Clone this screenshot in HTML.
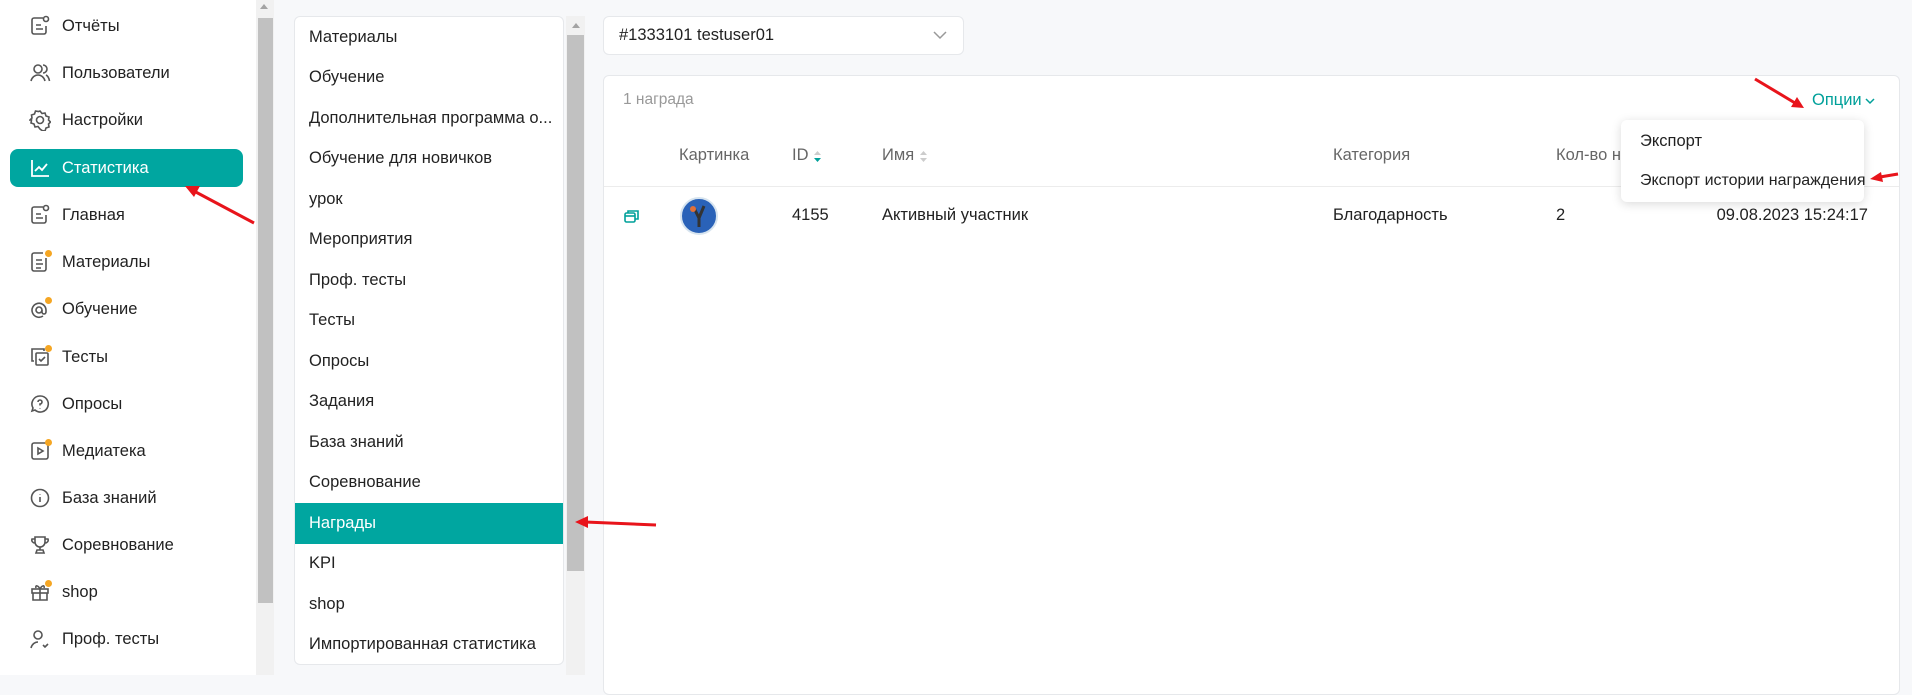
<!DOCTYPE html>
<html><head><meta charset="utf-8"><style>
*{box-sizing:border-box;margin:0;padding:0}
body{width:1912px;height:675px;overflow:hidden;background:#f7f8fa;font-family:"Liberation Sans",Arial,sans-serif;font-size:16.5px;color:#222;position:relative;white-space:nowrap}
.abs{position:absolute}
.side{left:0;top:0;width:256px;height:675px;background:#fff}
.si{position:absolute;left:10px;width:233px;height:38px;display:flex;align-items:center}
.si svg{position:absolute;left:19px;top:8px}
.si span{position:absolute;left:52px}
.si.act{background:#00a6a0;border-radius:8px;color:#fff}
.dot{position:absolute;width:7px;height:7px;border-radius:50%;background:#f5a623;left:35px;top:7px}
.panel{left:294px;top:16px;width:270px;height:649px;background:#fff;border:1px solid #e6e8eb;border-radius:6px;overflow:hidden}
.pi{position:absolute;left:0;width:270px;height:41px;line-height:41px;padding-left:14px;white-space:nowrap}
.pi.act{background:#00a6a0;color:#fff}
.hd{color:#666;position:absolute;top:146px}
.cell{position:absolute;top:206px}
</style></head><body>
<div class="abs side">
<div class="si" style="top:7px"><svg width="22" height="22" viewBox="0 0 22 22" fill="none" stroke="#555" stroke-width="1.6"><path d="M14 3H5a2 2 0 0 0-2 2v12a2 2 0 0 0 2 2h10a2 2 0 0 0 2-2v-6"/><path d="M7 10h5M7 14h7"/><circle cx="17" cy="4" r="2.5"/></svg><span>Отчёты</span></div>
<div class="si" style="top:54px"><svg width="22" height="22" viewBox="0 0 22 22" fill="none" stroke="#555" stroke-width="1.6"><circle cx="9" cy="7" r="4"/><path d="M2 19c1-4 4-6 7-6s6 2 7 6M14 3a4 4 0 0 1 0 8M17 13c2 1 3 3 3.5 6"/></svg><span>Пользователи</span></div>
<div class="si" style="top:101px"><svg width="22" height="22" viewBox="0 0 22 22" fill="none" stroke="#555" stroke-width="1.6"><path d="M11 2l2 2.5 3-.5 1 3 3 1-.5 3 2 2-2 2 .5 3-3 1-1 3-3-.5L11 20l-2-2.5-3 .5-1-3-3-1 .5-3L1 11l2-2-.5-3 3-1 1-3 3 .5z"/><circle cx="11" cy="11" r="3.5"/></svg><span>Настройки</span></div>
<div class="si act" style="top:149px"><svg width="22" height="22" viewBox="0 0 22 22" fill="none" stroke="#fff" stroke-width="1.8"><path d="M3 3v16h17M6 14l4-4 3 3 5-6"/></svg><span>Статистика</span></div>
<div class="si" style="top:196px"><svg width="22" height="22" viewBox="0 0 22 22" fill="none" stroke="#555" stroke-width="1.6"><path d="M14 3H5a2 2 0 0 0-2 2v12a2 2 0 0 0 2 2h10a2 2 0 0 0 2-2v-6"/><path d="M7 10h5M7 14h7"/><circle cx="17" cy="4" r="2.5"/></svg><span>Главная</span></div>
<div class="si" style="top:243px"><svg width="22" height="22" viewBox="0 0 22 22" fill="none" stroke="#555" stroke-width="1.6"><path d="M14 2H5a2 2 0 0 0-2 2v14a2 2 0 0 0 2 2h10a2 2 0 0 0 2-2V7"/><path d="M7 9h6M7 13h7M7 17h5"/></svg><i class="dot"></i><span>Материалы</span></div>
<div class="si" style="top:290px"><svg width="22" height="22" viewBox="0 0 22 22" fill="none" stroke="#555" stroke-width="1.6"><circle cx="10" cy="12" r="3"/><path d="M13 12v2a2 2 0 0 0 4 0v-2a7 7 0 1 0-3 6"/></svg><i class="dot"></i><span>Обучение</span></div>
<div class="si" style="top:338px"><svg width="22" height="22" viewBox="0 0 22 22" fill="none" stroke="#555" stroke-width="1.6"><path d="M5 15H3V3h12v2"/><rect x="7" y="7" width="12" height="12" rx="1"/><path d="M10 13l2 2 4-4"/></svg><i class="dot"></i><span>Тесты</span></div>
<div class="si" style="top:385px"><svg width="22" height="22" viewBox="0 0 22 22" fill="none" stroke="#555" stroke-width="1.6"><path d="M11 3a8 8 0 1 1-5 14l-3 1 1-3A8 8 0 0 1 11 3z"/><path d="M9 9a2 2 0 1 1 2 2v1.5M11 15v.5"/></svg><span>Опросы</span></div>
<div class="si" style="top:432px"><svg width="22" height="22" viewBox="0 0 22 22" fill="none" stroke="#555" stroke-width="1.6"><rect x="3" y="3" width="16" height="16" rx="2"/><path d="M9 8v6l5-3z"/></svg><i class="dot"></i><span>Медиатека</span></div>
<div class="si" style="top:479px"><svg width="22" height="22" viewBox="0 0 22 22" fill="none" stroke="#555" stroke-width="1.6"><circle cx="11" cy="11" r="8.5"/><path d="M11 10v5M11 7v.5"/></svg><span>База знаний</span></div>
<div class="si" style="top:526px"><svg width="22" height="22" viewBox="0 0 22 22" fill="none" stroke="#555" stroke-width="1.6"><path d="M6 3h10v5a5 5 0 0 1-10 0zM6 5H3a3 3 0 0 0 3 4M16 5h3a3 3 0 0 1-3 4M11 13v3M7 19h8l-1-3H8z"/></svg><span>Соревнование</span></div>
<div class="si" style="top:573px"><svg width="22" height="22" viewBox="0 0 22 22" fill="none" stroke="#555" stroke-width="1.6"><rect x="3" y="8" width="16" height="4"/><path d="M4 12v7h14v-7M11 8v11M11 8C9 4 6 4 7 7M11 8c2-4 5-4 4-1"/></svg><i class="dot"></i><span>shop</span></div>
<div class="si" style="top:620px"><svg width="22" height="22" viewBox="0 0 22 22" fill="none" stroke="#555" stroke-width="1.6"><circle cx="9" cy="7" r="4"/><path d="M2 20c1-4 4-6 7-6M14 17l2 2 3-3"/></svg><span>Проф. тесты</span></div>
</div>
<div class="abs" style="left:256px;top:0;width:18px;height:675px;background:#f1f1f1"></div>
<div class="abs" style="left:258px;top:18px;width:15px;height:585px;background:#c1c1c1"></div>
<div class="abs" style="left:260px;top:4px;width:0;height:0;border:4px solid transparent;border-bottom:5px solid #a3a3a3;border-top:0"></div>

<div class="abs panel">
<div class="pi" style="top:0">Материалы</div>
<div class="pi" style="top:40px">Обучение</div>
<div class="pi" style="top:81px">Дополнительная программа о...</div>
<div class="pi" style="top:121px">Обучение для новичков</div>
<div class="pi" style="top:162px">урок</div>
<div class="pi" style="top:202px">Мероприятия</div>
<div class="pi" style="top:243px">Проф. тесты</div>
<div class="pi" style="top:283px">Тесты</div>
<div class="pi" style="top:324px">Опросы</div>
<div class="pi" style="top:364px">Задания</div>
<div class="pi" style="top:405px">База знаний</div>
<div class="pi" style="top:445px">Соревнование</div>
<div class="pi act" style="top:486px">Награды</div>
<div class="pi" style="top:526px">KPI</div>
<div class="pi" style="top:567px">shop</div>
<div class="pi" style="top:607px">Импортированная статистика</div>
</div>
<div class="abs" style="left:566px;top:16px;width:19px;height:659px;background:#f1f1f1"></div>
<div class="abs" style="left:567px;top:35px;width:17px;height:536px;background:#c1c1c1"></div>
<div class="abs" style="left:572px;top:23px;width:0;height:0;border:4px solid transparent;border-bottom:5px solid #a3a3a3;border-top:0"></div>

<div class="abs" style="left:603px;top:16px;width:361px;height:39px;background:#fff;border:1px solid #e6e8eb;border-radius:6px"><span style="position:absolute;left:15px;top:9px">#1333101 testuser01</span><svg style="position:absolute;right:16px;top:13px" width="14" height="10" viewBox="0 0 14 10" fill="none" stroke="#999" stroke-width="1.5"><path d="M1 2l6 6 6-6"/></svg></div>

<div class="abs" style="left:603px;top:75px;width:1297px;height:620px;background:#fff;border:1px solid #e6e8eb;border-radius:6px"></div>
<div class="abs" style="left:623px;top:91px;color:#999;font-size:15.5px">1 награда</div>
<div class="abs" style="left:1812px;top:91px;color:#00a09a">Опции</div>
<svg class="abs" style="left:1864px;top:97px" width="12" height="8" viewBox="0 0 12 8" fill="none" stroke="#00a09a" stroke-width="1.5"><path d="M2 2l4 4 4-4"/></svg>

<div class="hd" style="left:679px">Картинка</div>
<div class="hd" style="left:792px">ID</div>
<svg class="abs" style="left:813px;top:150px" width="9" height="13" viewBox="0 0 9 13"><path d="M1 5l3.5-4 3.5 4z" fill="#ccc"/><path d="M1 8l3.5 4 3.5-4z" fill="#00a09a"/></svg>
<div class="hd" style="left:882px">Имя</div>
<svg class="abs" style="left:919px;top:150px" width="9" height="13" viewBox="0 0 9 13"><path d="M1 5l3.5-4 3.5 4z" fill="#ccc"/><path d="M1 8l3.5 4 3.5-4z" fill="#ccc"/></svg>
<div class="hd" style="left:1333px">Категория</div>
<div class="hd" style="left:1556px">Кол-во н</div>
<div class="abs" style="left:604px;top:186px;width:1295px;height:1px;background:#ececec"></div>

<svg class="abs" style="left:624px;top:209px" width="15" height="14" viewBox="0 0 15 14" fill="none" stroke="#00a09a" stroke-width="1.6"><rect x="1" y="4" width="10" height="9" rx="1.5"/><path d="M4 4V2h10v8h-3"/><path d="M1 7h10" /></svg>
<div class="abs" style="left:680px;top:197px;width:38px;height:38px;border-radius:50%;background:#2a62b8;border:2px solid #d7e4ef"><svg width="34" height="34" viewBox="0 0 34 34"><path d="M12 9l5 10 5-12M17 19v9" stroke="#333" stroke-width="3" fill="none"/><circle cx="11" cy="10" r="3" fill="#e0703a"/></svg></div>
<div class="cell" style="left:792px">4155</div>
<div class="cell" style="left:882px">Активный участник</div>
<div class="cell" style="left:1333px">Благодарность</div>
<div class="cell" style="left:1556px">2</div>
<div class="cell" style="left:1668px;width:200px;text-align:right">09.08.2023 15:24:17</div>

<div class="abs" style="left:1621px;top:120px;width:243px;height:82px;background:#fff;border-radius:6px;box-shadow:0 2px 10px rgba(0,0,0,.15)">
<div style="position:absolute;left:19px;top:12px">Экспорт</div>
<div style="position:absolute;left:19px;top:52px;font-size:16px">Экспорт истории награждения</div>
</div>

<svg class="abs" style="left:0;top:0" width="1912" height="675" fill="none">
<g stroke="#e8141b" stroke-width="3"><path d="M254 223L192 190"/><path d="M656 525L585 522"/><path d="M1755 79L1795 103"/><path d="M1898 174L1880 177"/></g>
<g fill="#e8141b"><path d="M185 186l15 0-6 11z"/><path d="M575 522l13-6v12z"/><path d="M1804 108l-13-1 6-10z"/><path d="M1870 179l11-7 2 10z"/></g>
</svg>
</body></html>
